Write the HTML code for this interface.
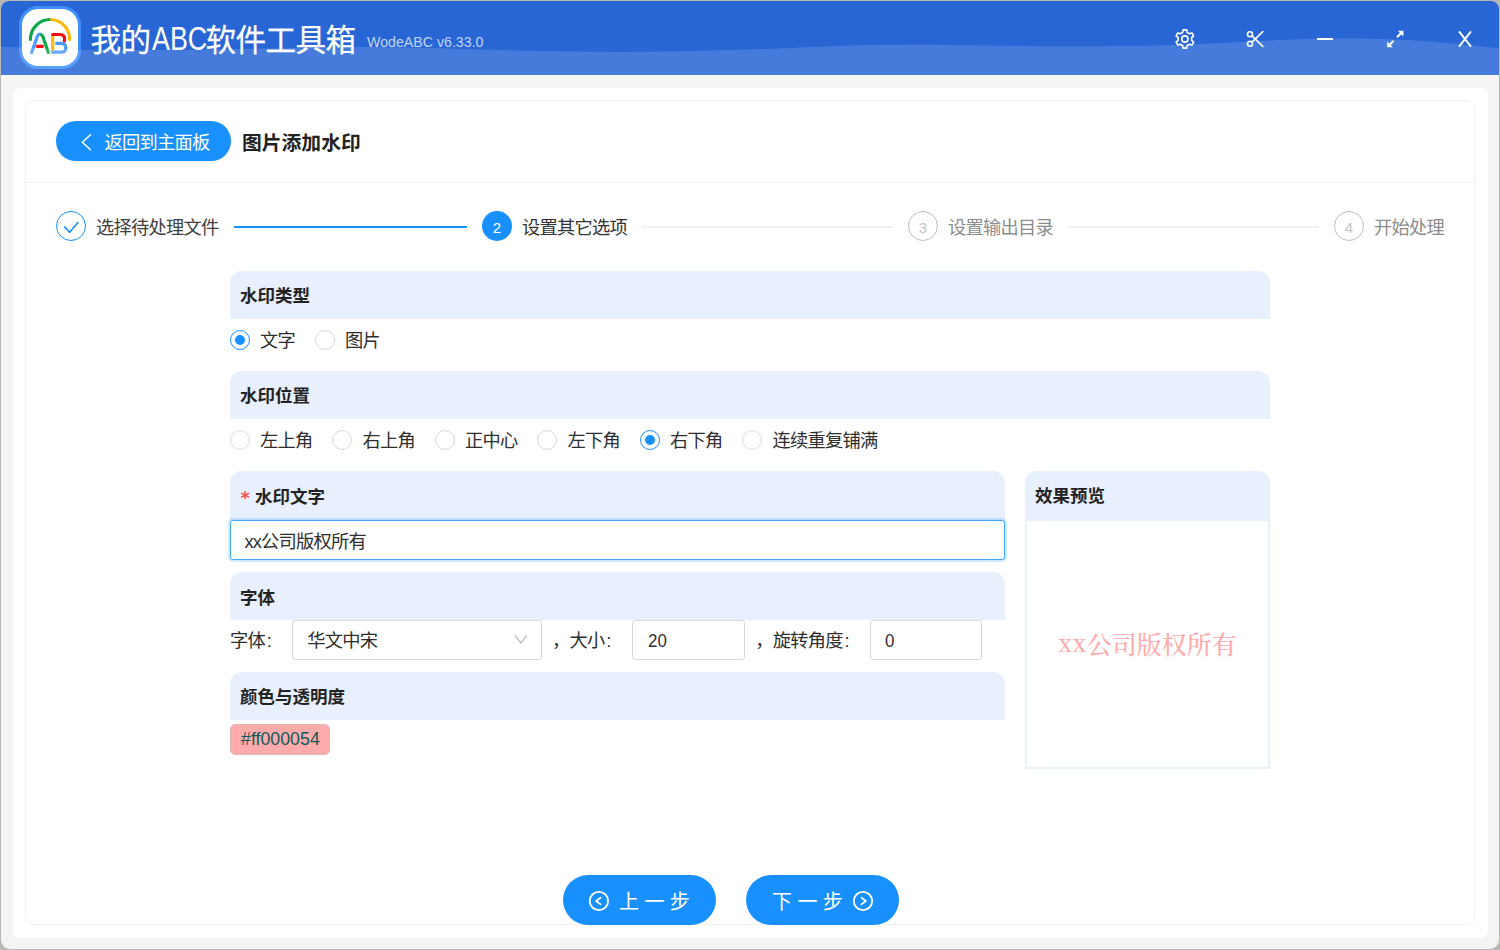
<!DOCTYPE html>
<html lang="zh-CN">
<head>
<meta charset="utf-8">
<title>我的ABC软件工具箱</title>
<style>
*{box-sizing:border-box;margin:0;padding:0}
html,body{width:1500px;height:950px;overflow:hidden;background:#b9b7b2}
body{font-family:"Liberation Sans","Noto Sans CJK SC",sans-serif;color:#333;position:relative}
.abs{position:absolute;white-space:nowrap}
#win{position:absolute;left:1px;top:1px;width:1498px;height:948px;background:#f4f4f4;border-radius:8px 8px 9px 9px;overflow:hidden}
#hdr{position:absolute;left:0;top:0;width:1498px;height:74px;background:#2866d6}
#outer{position:absolute;left:12px;top:87px;width:1475px;height:850px;background:#fff;border-radius:7px}
#inner{position:absolute;left:24px;top:99px;width:1450px;height:825px;background:#fff;border:1px solid #f0f0f0;border-radius:9px}
.t{position:absolute;white-space:nowrap;line-height:1}
.sec{position:absolute;background:#e8effd;border-radius:12px 12px 0 0}
.sec b{position:absolute;left:10px;font-size:17.5px;line-height:1;font-weight:bold;color:#222;white-space:nowrap}
.radio{position:absolute;width:20px;height:20px;border:1px solid #d9d9d9;border-radius:50%;background:#fff}
.radio.on{border-color:#1890ff}
.radio.on::after{content:"";position:absolute;left:4px;top:4px;width:10px;height:10px;border-radius:50%;background:#1890ff}
.lab{position:absolute;font-size:18.25px;letter-spacing:-0.75px;line-height:1;white-space:nowrap;color:#2e2e2e}
.inp{position:absolute;background:#fff;border:1px solid #d9d9d9;border-radius:2px}
.btn{position:absolute;background:#1890ff;border-radius:25px;color:#fff}
</style>
</head>
<body>
<div id="win">
  <div id="hdr">
  </div>
  <div id="outer"></div>
  <div id="inner"></div>
</div>
<div id="ui" class="abs" style="left:0;top:0;width:1500px;height:950px">
<!--HEADER-->
<div class="abs" style="left:19px;top:6px;width:62px;height:63px;border:3px solid #3f90ff;border-radius:19px;background:#fff"></div>
<svg class="abs" style="left:19px;top:6px" width="62" height="63" viewBox="19 6 62 63" fill="none" stroke-linecap="round" stroke-linejoin="round">
  <path d="M30.4,39.4 A19.8,19.8 0 0 1 50.3,19.5" stroke="#0aa845" stroke-width="3.2"/>
  <path d="M51.6,19.5 A19.8,19.8 0 0 1 69.6,39.4" stroke="#fbb90c" stroke-width="3.2"/>
  <path d="M31.6,52.6 L37.4,36.4 Q38.6,33.8 40.6,34.3" stroke="#4a9bff" stroke-width="3.2"/>
  <path d="M41.6,35 Q42.6,35.6 43.2,37.4 L48.3,52.6" stroke="#0aa845" stroke-width="3.2"/>
  <path d="M37.2,46.3 L42.4,46.3" stroke="#ff0a0a" stroke-width="3.2"/>
  <path d="M52.7,35 L52.7,52" stroke="#fbb90c" stroke-width="3.2"/>
  <path d="M52.7,34.5 L60,34.5 Q64.6,34.8 64.6,39 L64.3,41.2" stroke="#ff0a0a" stroke-width="3.2"/>
  <path d="M56.6,43.4 L61.5,43.4 Q65.8,43.6 65.8,47.8 Q65.8,52.2 61.5,52.2 L52.8,52.2" stroke="#4a9bff" stroke-width="3.2"/>
</svg>
<svg class="abs" style="left:1px;top:1px" width="1498" height="74" viewBox="1 1 1498 74"><path d="M0,76 L0,46.7 20,47.4 40,48.2 60,49.1 80,49.7 100,49.9 120,50.0 140,50.1 160,50.1 180,49.9 200,49.6 220,49.3 240,49.0 260,48.6 280,48.2 300,47.8 320,47.4 340,47.1 360,47.0 380,47.1 400,47.4 420,47.8 440,48.3 460,48.9 480,49.5 500,50.0 520,50.5 540,51.0 560,51.3 580,51.6 600,51.8 620,51.9 640,51.8 660,51.5 680,51.2 700,50.8 720,50.3 740,49.7 760,49.0 780,48.4 800,47.6 820,46.8 840,45.9 860,45.2 880,44.8 900,44.7 920,44.6 940,44.8 960,45.2 980,45.6 1000,45.8 1020,46.0 1040,46.2 1060,46.4 1080,46.4 1100,46.3 1120,46.1 1140,45.9 1160,45.5 1180,45.0 1200,44.0 1220,43.0 1240,41.9 1260,41.0 1280,40.1 1300,39.3 1320,38.7 1340,38.4 1360,38.6 1380,39.0 1400,39.6 1420,40.8 1440,42.4 1460,44.2 1480,46.2 1500,48.4 L1500,76 Z" fill="rgba(255,255,255,0.14)"/></svg>
<div class="t" id="title" style="left:90.6px;top:25.2px;font-size:30.6px;letter-spacing:-0.6px;-webkit-text-stroke:0.25px #fff;color:#fff">我的<span id="abc" style="display:inline-block;width:55px;height:30px;vertical-align:top;position:relative"><span style="position:absolute;left:1px;top:-3.1px;font-size:33.6px;letter-spacing:0;-webkit-text-stroke:0;transform:scaleX(0.8);transform-origin:0 0">ABC</span></span>软件工具箱</div>
<div class="t" id="ver" style="left:367px;top:34.5px;font-size:14.2px;color:#c3d4f4">WodeABC v6.33.0</div>
<svg class="abs" style="left:1172px;top:26px" width="26" height="26" viewBox="1172 26 26 26" fill="none" stroke="#fff" stroke-width="1.6" stroke-linejoin="round">
  <circle cx="1184.9" cy="39" r="3.1"/>
  <path d="M1187.15,32.48 L1186.67,29.87 L1183.13,29.87 L1182.65,32.48 L1180.37,33.79 L1177.88,32.90 L1176.11,35.97 L1178.13,37.68 L1178.13,40.32 L1176.11,42.03 L1177.88,45.10 L1180.37,44.21 L1182.65,45.52 L1183.13,48.13 L1186.67,48.13 L1187.15,45.52 L1189.43,44.21 L1191.92,45.10 L1193.69,42.03 L1191.67,40.32 L1191.67,37.68 L1193.69,35.97 L1191.92,32.90 L1189.43,33.79 Z"/>
</svg>
<svg class="abs" style="left:1242px;top:26px" width="26" height="26" viewBox="1242 26 26 26" fill="none" stroke="#fff" stroke-width="1.6" stroke-linecap="round">
  <circle cx="1250" cy="34.2" r="2.5"/>
  <circle cx="1250" cy="43.8" r="2.5"/>
  <path d="M1252,35.9 L1262.8,46.4 M1252,42.1 L1262.8,31.6"/>
</svg>
<div class="abs" style="left:1316.7px;top:37.5px;width:16.5px;height:2px;background:#fff"></div>
<svg class="abs" style="left:1382px;top:26px" width="26" height="26" viewBox="1382 26 26 26" fill="#fff" stroke="#fff" stroke-width="1.5">
  <path d="M1397,37.2 L1401,33.2 M1393.6,40.8 L1389.6,44.8" fill="none" stroke-width="2"/>
  <path d="M1397.8,30.8 L1403.4,30.8 L1403.4,36.4 Z M1387.2,41.6 L1387.2,47.2 L1392.8,47.2 Z" stroke="none"/>
</svg>
<svg class="abs" style="left:1452px;top:26px" width="26" height="26" viewBox="1452 26 26 26" fill="none" stroke="#fff" stroke-width="1.9">
  <path d="M1459,31.4 L1471,46.6 M1471,31.4 L1459,46.6"/>
</svg>
<!--TOOLBAR-->
<div class="abs" style="left:56px;top:121px;width:175px;height:40px;border-radius:20px;background:#1890ff;box-shadow:0 2px 1px rgba(0,0,0,.04)"></div>
<svg class="abs" style="left:78px;top:132px" width="18" height="22" viewBox="78 132 18 22" fill="none" stroke="#fff" stroke-width="1.5" stroke-linecap="round" stroke-linejoin="round"><path d="M90.5,134.7 L82.3,142.3 L90.5,149.7"/></svg>
<div class="t" id="back" style="letter-spacing:-0.75px;left:104.4px;top:134px;font-size:18.25px;color:#fff">返回到主面板</div>
<div class="t" id="ptitle" style="left:242px;top:134px;font-size:19.8px;font-weight:bold;color:#222">图片添加水印</div>
<div class="abs" style="left:26px;top:182px;width:1448px;height:1px;background:#efefef"></div>
<!--STEPS-->
<div class="abs" style="left:56px;top:211px;width:30px;height:30px;border:1px solid #1890ff;border-radius:50%"></div>
<svg class="abs" style="left:56px;top:211px" width="30" height="30" viewBox="56 211 30 30" fill="none" stroke="#1890ff" stroke-width="1.6" stroke-linecap="round" stroke-linejoin="round"><path d="M64.7,226.9 L69.7,232.3 L77.9,222.5"/></svg>
<div class="t" id="s1" style="letter-spacing:-0.75px;left:96px;top:218.5px;font-size:18.25px;color:#404040">选择待处理文件</div>
<div class="abs" style="left:234px;top:226px;width:233px;height:2px;background:#1890ff"></div>
<div class="abs" style="left:482px;top:211px;width:30px;height:30px;border-radius:50%;background:#1890ff"></div>
<div class="t" id="n2" style="left:482px;top:220px;width:30px;text-align:center;font-size:15px;color:#fff">2</div>
<div class="t" id="s2" style="letter-spacing:-0.75px;left:522px;top:218.5px;font-size:18.25px;color:#333">设置其它选项</div>
<div class="abs" style="left:642px;top:226px;width:251px;height:2px;background:#f0f0f0"></div>
<div class="abs" style="left:908px;top:211px;width:30px;height:30px;border:1px solid #bdbdbd;border-radius:50%"></div>
<div class="t" id="n3" style="left:908px;top:220px;width:30px;text-align:center;font-size:15px;color:#c4c4c4">3</div>
<div class="t" id="s3" style="letter-spacing:-0.75px;left:948px;top:218.5px;font-size:18.25px;color:#8c8c8c">设置输出目录</div>
<div class="abs" style="left:1068px;top:226px;width:251px;height:2px;background:#f0f0f0"></div>
<div class="abs" style="left:1334px;top:211px;width:30px;height:30px;border:1px solid #bdbdbd;border-radius:50%"></div>
<div class="t" id="n4" style="left:1334px;top:220px;width:30px;text-align:center;font-size:15px;color:#c4c4c4">4</div>
<div class="t" id="s4" style="letter-spacing:-0.75px;left:1374px;top:218.5px;font-size:18.25px;color:#8c8c8c">开始处理</div>
<!--FORM-->
<div class="sec" style="left:230px;top:271px;width:1040px;height:48px"><b id="h1" style="top:17.3px">水印类型</b></div>
<div class="radio on" style="left:230px;top:330px"></div><div class="lab" id="r11" style="left:260px;top:332px">文字</div>
<div class="radio" style="left:315px;top:330px"></div><div class="lab" id="r12" style="left:345px;top:332px">图片</div>
<div class="sec" style="left:230px;top:371px;width:1040px;height:48px"><b id="h2" style="top:17.4px">水印位置</b></div>
<div class="radio" style="left:230px;top:430px"></div><div class="lab" id="r21" style="left:260px;top:432px">左上角</div>
<div class="radio" style="left:332px;top:430px"></div><div class="lab" id="r22" style="left:362.5px;top:432px">右上角</div>
<div class="radio" style="left:435px;top:430px"></div><div class="lab" id="r23" style="left:465px;top:432px">正中心</div>
<div class="radio" style="left:537px;top:430px"></div><div class="lab" id="r24" style="left:567.5px;top:432px">左下角</div>
<div class="radio on" style="left:640px;top:430px"></div><div class="lab" id="r25" style="left:670px;top:432px">右下角</div>
<div class="radio" style="left:742px;top:430px"></div><div class="lab" id="r26" style="left:772.5px;top:432px">连续重复铺满</div>
<div class="sec" style="left:230px;top:471px;width:775px;height:49px"><span class="t" id="star" style="left:10.6px;top:18px;font-family:'DejaVu Sans',sans-serif;font-weight:bold;font-size:18px;color:#ff4d4f">*</span><b id="h3" style="left:25px;top:18.3px">水印文字</b></div>
<div class="inp" style="left:230px;top:520px;width:775px;height:40px;border-color:#40a9ff;border-radius:3px;box-shadow:0 0 0 2px rgba(24,144,255,.2)"></div>
<div class="lab" id="itxt" style="left:244.5px;top:532.8px"><span style="letter-spacing:-0.9px">xx</span>公司版权所有</div>
<div class="sec" style="left:230px;top:572px;width:775px;height:48px"><b id="h4" style="top:17.9px">字体</b></div>
<div class="lab" id="f1" style="left:230px;top:632px">字体<span style="margin-left:1.7px">:</span></div>
<div class="inp" style="left:292px;top:620px;width:250px;height:40px;border-radius:3px"></div>
<div class="lab" id="f2" style="left:307.2px;top:632px">华文中宋</div>
<svg class="abs" style="left:512px;top:632px" width="18" height="14" viewBox="512 632 18 14" fill="none" stroke="#bfbfbf" stroke-width="1.3" stroke-linecap="round" stroke-linejoin="round"><path d="M515,635.6 L520.8,643 L526.6,635.6"/></svg>
<div class="lab" id="f3" style="left:552px;top:632px">，大小<span style="margin-left:1.8px">:</span></div>
<div class="inp" style="left:632px;top:620px;width:113px;height:40px;border-radius:3px"></div>
<div class="lab" id="f4" style="font-size:19px;letter-spacing:0;transform:scaleX(0.89);transform-origin:0 0;left:648.3px;top:630.9px">20</div>
<div class="lab" id="f5" style="left:755.2px;top:632px">，旋转角度<span style="margin-left:1.8px">:</span></div>
<div class="inp" style="left:870px;top:620px;width:112px;height:40px;border-radius:3px"></div>
<div class="lab" id="f6" style="font-size:19px;letter-spacing:0;transform:scaleX(0.89);transform-origin:0 0;left:885px;top:630.9px">0</div>
<div class="sec" style="left:230px;top:672px;width:775px;height:48px"><b id="h5" style="top:17px">颜色与透明度</b></div>
<div class="abs" style="left:230px;top:724px;width:100px;height:31px;background:#ffabab;border:1px solid #d8bcbc;border-radius:5px"></div>
<div class="t" id="chip" style="left:241px;top:731.2px;font-size:17.8px;color:#0f5a57">#ff000054</div>
<!--PREVIEW-->
<div class="abs" style="left:1025px;top:519px;width:245px;height:250px;border:2px solid #e8effd;background:#fff"></div>
<div class="sec" style="left:1025px;top:471px;width:245px;height:50px"><b id="h6" style="top:17.4px">效果预览</b></div>
<div class="t" id="pv" style="left:1025px;top:631px;width:245px;text-align:center;font-family:'Liberation Serif','Noto Serif CJK SC',serif;font-size:25px;font-weight:500;color:#ffabab"><span style="font-size:27.5px;letter-spacing:0.5px;position:relative;top:-1.6px">xx</span>公司版权所有</div>
<!--BUTTONS-->
<div class="btn" style="left:563px;top:875px;width:153px;height:50px"></div>
<svg class="abs" style="left:587px;top:889px" width="24" height="24" viewBox="587 889 24 24" fill="none" stroke="#fff" stroke-width="1.8" stroke-linecap="round" stroke-linejoin="round"><circle cx="598.9" cy="901" r="9.2"/><path d="M600.6,897.6 L596.2,901 L600.6,904.4"/></svg>
<div class="t" id="b1" style="left:619px;top:892.2px;font-size:20px;letter-spacing:5.4px;color:#fff">上一步</div>
<div class="btn" style="left:746px;top:875px;width:153px;height:50px"></div>
<div class="t" id="b2" style="left:772px;top:892.2px;font-size:20px;letter-spacing:5.4px;color:#fff">下一步</div>
<svg class="abs" style="left:851px;top:889px" width="24" height="24" viewBox="851 889 24 24" fill="none" stroke="#fff" stroke-width="1.8" stroke-linecap="round" stroke-linejoin="round"><circle cx="863" cy="901" r="9.2"/><path d="M861.4,897.6 L865.8,901 L861.4,904.4"/></svg>
</div>
</body>
</html>
